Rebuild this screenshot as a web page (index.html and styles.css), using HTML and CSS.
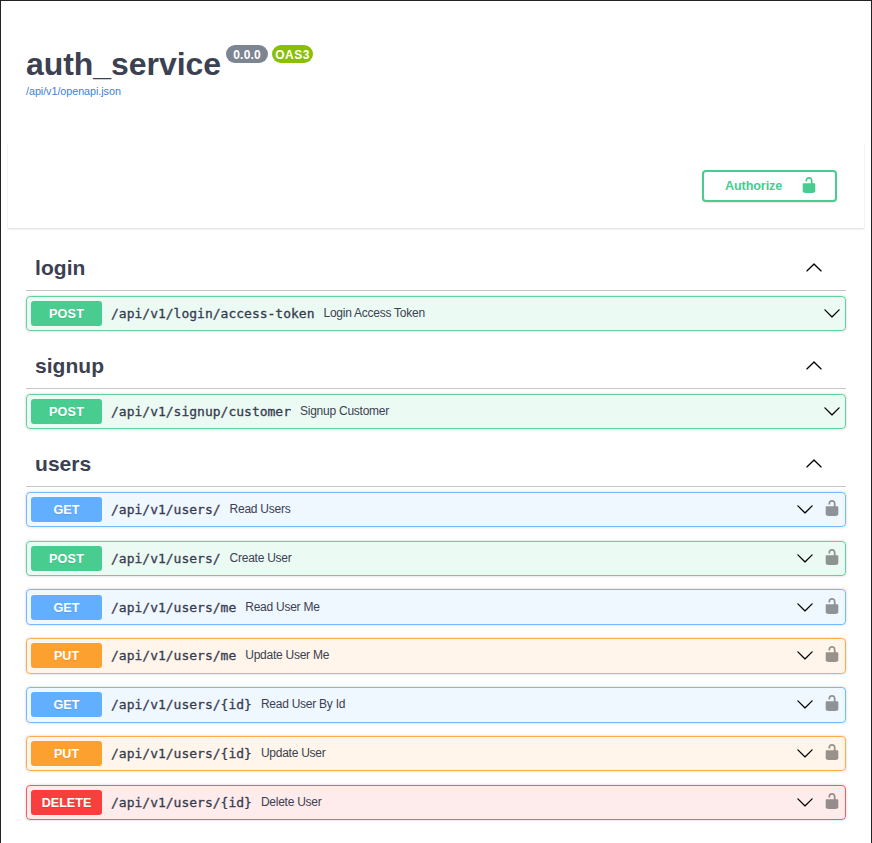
FILE: index.html
```html
<!DOCTYPE html>
<html lang="en">
<head>
<meta charset="utf-8">
<title>auth_service</title>
<link rel="stylesheet" href="styles.css">
</head>
<body>
<svg class="defs" width="0" height="0">
  <symbol id="unlocked" viewBox="0 0 20 20"><path d="M15.8 8H14V5.6C14 2.703 12.665 1 10 1 7.334 1 6 2.703 6 5.6V6h2v-.801C8 3.754 8.797 3 10 3c1.203 0 2 .754 2 2.199V8H4c-.553 0-1 .646-1 1.199V17c0 .549.428 1.139.951 1.307l1.197.387C5.672 18.861 6.55 19 7.1 19h5.8c.549 0 1.428-.139 1.951-.307l1.196-.387c.524-.167.953-.757.953-1.306V9.199C17 8.646 16.352 8 15.8 8z"/></symbol>
  <symbol id="up" viewBox="0 0 20 20"><path d="M 17.418 14.908 C 17.69 15.176 18.127 15.176 18.397 14.908 C 18.667 14.64 18.668 14.207 18.397 13.939 L 10.489 6.109 C 10.219 5.841 9.782 5.841 9.51 6.109 L 1.602 13.939 C 1.332 14.207 1.332 14.64 1.602 14.908 C 1.873 15.176 2.311 15.176 2.581 14.908 L 10 7.767 L 17.418 14.908 Z"/></symbol>
  <symbol id="down" viewBox="0 0 20 20"><path d="M17.418 6.109c.272-.268.709-.268.979 0s.271.701 0 .969l-7.908 7.83c-.27.268-.707.268-.979 0l-7.908-7.83c-.27-.268-.27-.701 0-.969.271-.268.709-.268.979 0L10 13.25l7.418-7.141z"/></symbol>
</svg>
<div class="page">
  <header class="info">
    <div class="title-row">
      <h1>auth_service</h1>
      <span class="badge version">0.0.0</span>
      <span class="badge oas">OAS3</span>
    </div>
    <a class="spec">/api/v1/openapi.json</a>
  </header>
  <section class="scheme">
    <button class="authorize"><span>Authorize</span><svg><use href="#unlocked"/></svg></button>
  </section>
  <main>
    <section class="tag">
      <h2><span>login</span><svg><use href="#up"/></svg></h2>
      <div class="op post"><b class="method">POST</b><code>/api/v1/login/access-token</code><span class="summary">Login Access Token</span><svg class="arrow"><use href="#down"/></svg></div>
    </section>
    <section class="tag">
      <h2><span>signup</span><svg><use href="#up"/></svg></h2>
      <div class="op post"><b class="method">POST</b><code>/api/v1/signup/customer</code><span class="summary">Signup Customer</span><svg class="arrow"><use href="#down"/></svg></div>
    </section>
    <section class="tag">
      <h2><span>users</span><svg><use href="#up"/></svg></h2>
      <div class="op get"><b class="method">GET</b><code>/api/v1/users/</code><span class="summary">Read Users</span><svg class="arrow"><use href="#down"/></svg><svg class="lock"><use href="#unlocked"/></svg></div>
      <div class="op post"><b class="method">POST</b><code>/api/v1/users/</code><span class="summary">Create User</span><svg class="arrow"><use href="#down"/></svg><svg class="lock"><use href="#unlocked"/></svg></div>
      <div class="op get"><b class="method">GET</b><code>/api/v1/users/me</code><span class="summary">Read User Me</span><svg class="arrow"><use href="#down"/></svg><svg class="lock"><use href="#unlocked"/></svg></div>
      <div class="op put"><b class="method">PUT</b><code>/api/v1/users/me</code><span class="summary">Update User Me</span><svg class="arrow"><use href="#down"/></svg><svg class="lock"><use href="#unlocked"/></svg></div>
      <div class="op get"><b class="method">GET</b><code>/api/v1/users/{id}</code><span class="summary">Read User By Id</span><svg class="arrow"><use href="#down"/></svg><svg class="lock"><use href="#unlocked"/></svg></div>
      <div class="op put"><b class="method">PUT</b><code>/api/v1/users/{id}</code><span class="summary">Update User</span><svg class="arrow"><use href="#down"/></svg><svg class="lock"><use href="#unlocked"/></svg></div>
      <div class="op delete"><b class="method">DELETE</b><code>/api/v1/users/{id}</code><span class="summary">Delete User</span><svg class="arrow"><use href="#down"/></svg><svg class="lock"><use href="#unlocked"/></svg></div>
    </section>
  </main>
</div>
</body>
</html>
```
FILE: styles.css
```css
* { box-sizing: border-box; }
body { margin: 0; background: #fff; color: #3b4151; font-family: "Liberation Sans", Arial, sans-serif; }
.defs { position: absolute; }
.page { height: 843px; overflow: hidden; border: 1px solid #222; border-bottom: 0; padding: 0 7px; }
.info { height: 142px; padding: 44px 18px 0; }
.title-row { display: flex; align-items: flex-start; height: 38px; }
h1 { margin: 0; font-size: 32px; line-height: 38px; letter-spacing: -.05px; }
.badge { height: 18px; border-radius: 9px; color: #fff; font-size: 12px; font-weight: bold; line-height: 20px; text-align: center; }
.version { width: 42px; margin-left: 5px; background: #7d8492; letter-spacing: .2px; }
.oas { width: 41px; margin-left: 4px; background: #89bf04; letter-spacing: .5px; }
.spec { display: block; margin-top: 2px; font-size: 10.8px; line-height: 13px; letter-spacing: -.06px; color: #4080d8; }
.scheme { display: flex; justify-content: flex-end; height: 85px; padding: 26.5px 27px 0; box-shadow: 0 1px 2px rgba(0,0,0,.15); }
.authorize { display: flex; align-items: center; justify-content: space-between; width: 135px; height: 32px; padding: 0 17px 0 21px; border: 2px solid #49cc90; border-radius: 4px; background: transparent; box-shadow: 0 1px 2px rgba(0,0,0,.1); color: #49cc90; font: bold 12.6px "Liberation Sans", sans-serif; letter-spacing: -.1px; }
.authorize svg { width: 18px; height: 18px; margin-bottom: 1px; fill: #49cc90; }
main { padding: 18.7px 18px 0; }
h2 { display: flex; align-items: center; justify-content: space-between; height: 44.8px; margin: 0 0 4.4px; padding: 0 23px 1px 9px; border-bottom: 1px solid rgba(59,65,81,.3); font-size: 21px; line-height: 24px; letter-spacing: .05px; }
h2 svg { width: 18px; height: 18px; margin-bottom: 3px; }
.op { display: flex; align-items: center; height: 35.6px; margin-bottom: 13.2px; padding: 0 4px; border: 1px solid; border-radius: 4px; box-shadow: 0 0 3px rgba(0,0,0,.19); }
.method { width: 71px; height: 25px; border-radius: 3px; color: #fff; font-size: 12.6px; line-height: 26px; text-align: center; text-shadow: 0 1px 0 rgba(0,0,0,.1); }
.post .method { letter-spacing: .2px; }
code { margin-left: 9px; font: 13px "DejaVu Sans Mono", monospace; -webkit-text-stroke: .3px #30364a; }
.summary { margin: 0 0 1px 9px; font-size: 12px; letter-spacing: -.25px; }
.arrow { width: 18px; height: 18px; margin: 0 0 1px auto; }
.lock { width: 18px; height: 18px; margin: 0 0 3px 9px; opacity: .4; }
.post { border-color: #60d29e; background: rgba(73,204,144,.1); }
.get { border-color: #75b9fe; background: rgba(97,175,254,.1); }
.put { border-color: #fcad4b; background: rgba(252,161,48,.1); }
.delete { border-color: #f95c5c; background: rgba(249,62,62,.1); }
.post .method { background: #49cc90; }
.get .method { background: #61affe; }
.put .method { background: #fca130; }
.delete .method { background: #f93e3e; }
```
